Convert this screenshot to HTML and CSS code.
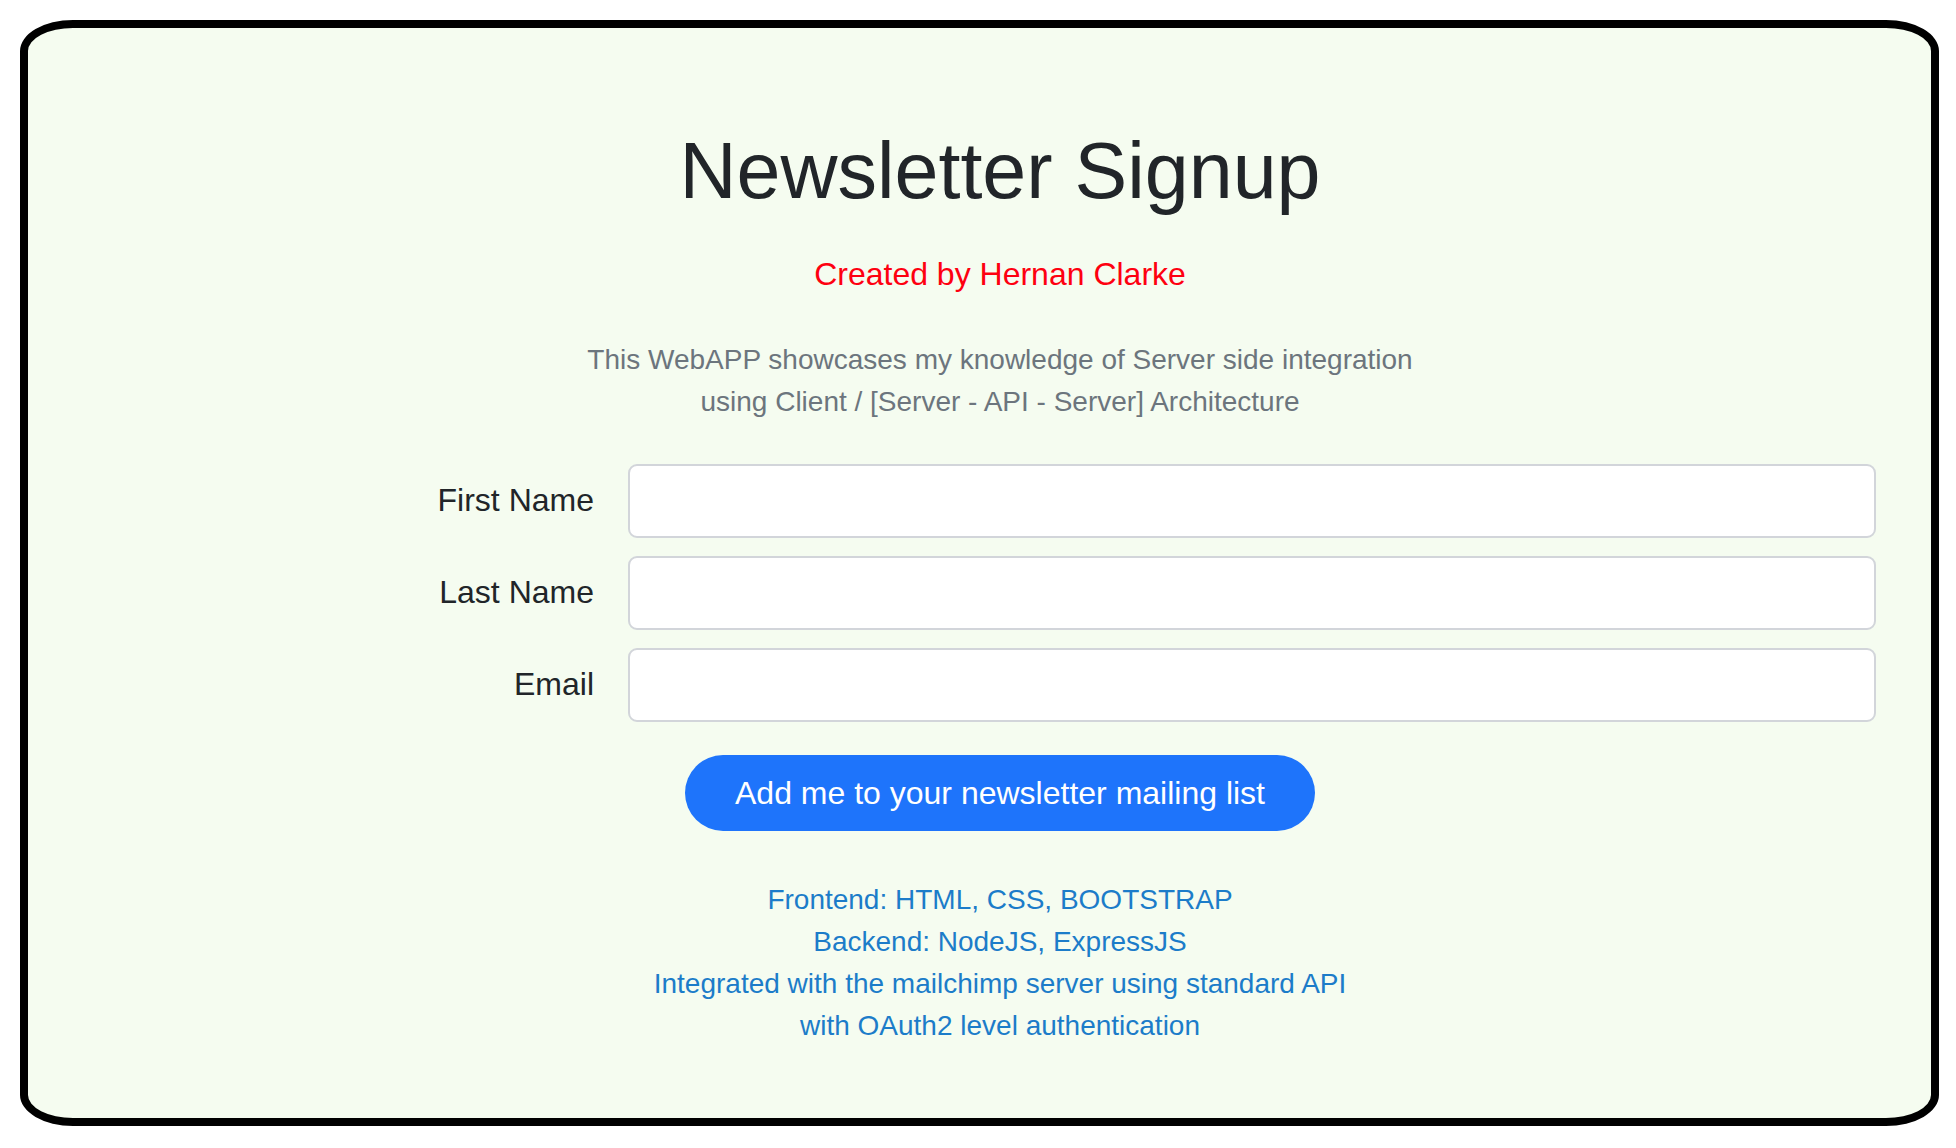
FILE: index.html
```html
<!DOCTYPE html>
<html lang="en">
<head>
<meta charset="utf-8">
<title>Newsletter Signup</title>
<link rel="stylesheet" href="styles.css">
</head>
<body>
<main class="card">
  <h1 class="title">Newsletter Signup</h1>
  <p class="author">Created by Hernan Clarke</p>
  <p class="desc">This WebAPP showcases my knowledge of Server side integration<br>using Client / [Server - API - Server] Architecture</p>
  <form class="form">
    <div class="row">
      <label class="label" for="fn">First Name</label>
      <input class="input" id="fn" type="text">
    </div>
    <div class="row">
      <label class="label" for="ln">Last Name</label>
      <input class="input" id="ln" type="text">
    </div>
    <div class="row">
      <label class="label" for="em">Email</label>
      <input class="input" id="em" type="email">
    </div>
    <div class="actions">
      <button class="btn" type="button">Add me to your newsletter mailing list</button>
    </div>
  </form>
  <p class="stack">Frontend: HTML, CSS, BOOTSTRAP<br>Backend: NodeJS, ExpressJS<br>Integrated with the mailchimp server using standard API<br>with OAuth2 level authentication</p>
</main>
</body>
</html>
```

FILE: styles.css
```css
html, body {
  background: #ffffff;
}
body {
  margin: 20px 17px 22px 20px;
  font-family: "Liberation Sans", Arial, Helvetica, sans-serif;
  color: #212529;
}
.card {
  box-sizing: border-box;
  height: 1106px;
  border: 8px solid #000000;
  border-radius: 53px / 31px;
  background: #f5fcf0;
  padding: 96px 55px 0 96px;
  display: flex;
  flex-direction: column;
  align-items: stretch;
}
.title {
  margin: 0;
  font-size: 79px;
  line-height: 1.2;
  font-weight: 400;
  text-align: center;
  color: #212529;
}
.author {
  margin: 31px 0 0;
  font-size: 32px;
  line-height: 48px;
  text-align: center;
  color: #fe0010;
}
.desc {
  margin: 41px 0 0;
  font-size: 28px;
  line-height: 42px;
  text-align: center;
  color: #6c757d;
}
.form {
  margin: 41px 0 0;
  display: flex;
  flex-direction: column;
  gap: 18px;
}
.row {
  display: flex;
  align-items: center;
  gap: 34px;
}
.label {
  width: 470px;
  flex: none;
  text-align: right;
  font-size: 32px;
  color: #212529;
}
.input {
  flex: 1;
  box-sizing: border-box;
  height: 74px;
  border: 2px solid #d2d5da;
  border-radius: 9px;
  background: #ffffff;
  margin: 0;
  font-size: 28px;
  font-family: inherit;
}
.actions {
  margin-top: 15px;
  display: flex;
  justify-content: center;
}
.btn {
  height: 76px;
  padding: 0 50px;
  border: none;
  border-radius: 38px;
  background: #1e74fb;
  color: #ffffff;
  font-family: "Liberation Sans", Arial, Helvetica, sans-serif;
  font-size: 32px;
  line-height: 1;
  cursor: pointer;
}
.stack {
  margin: 48px 0 0;
  font-size: 28px;
  line-height: 42px;
  text-align: center;
  color: #1c7cc9;
}
```
